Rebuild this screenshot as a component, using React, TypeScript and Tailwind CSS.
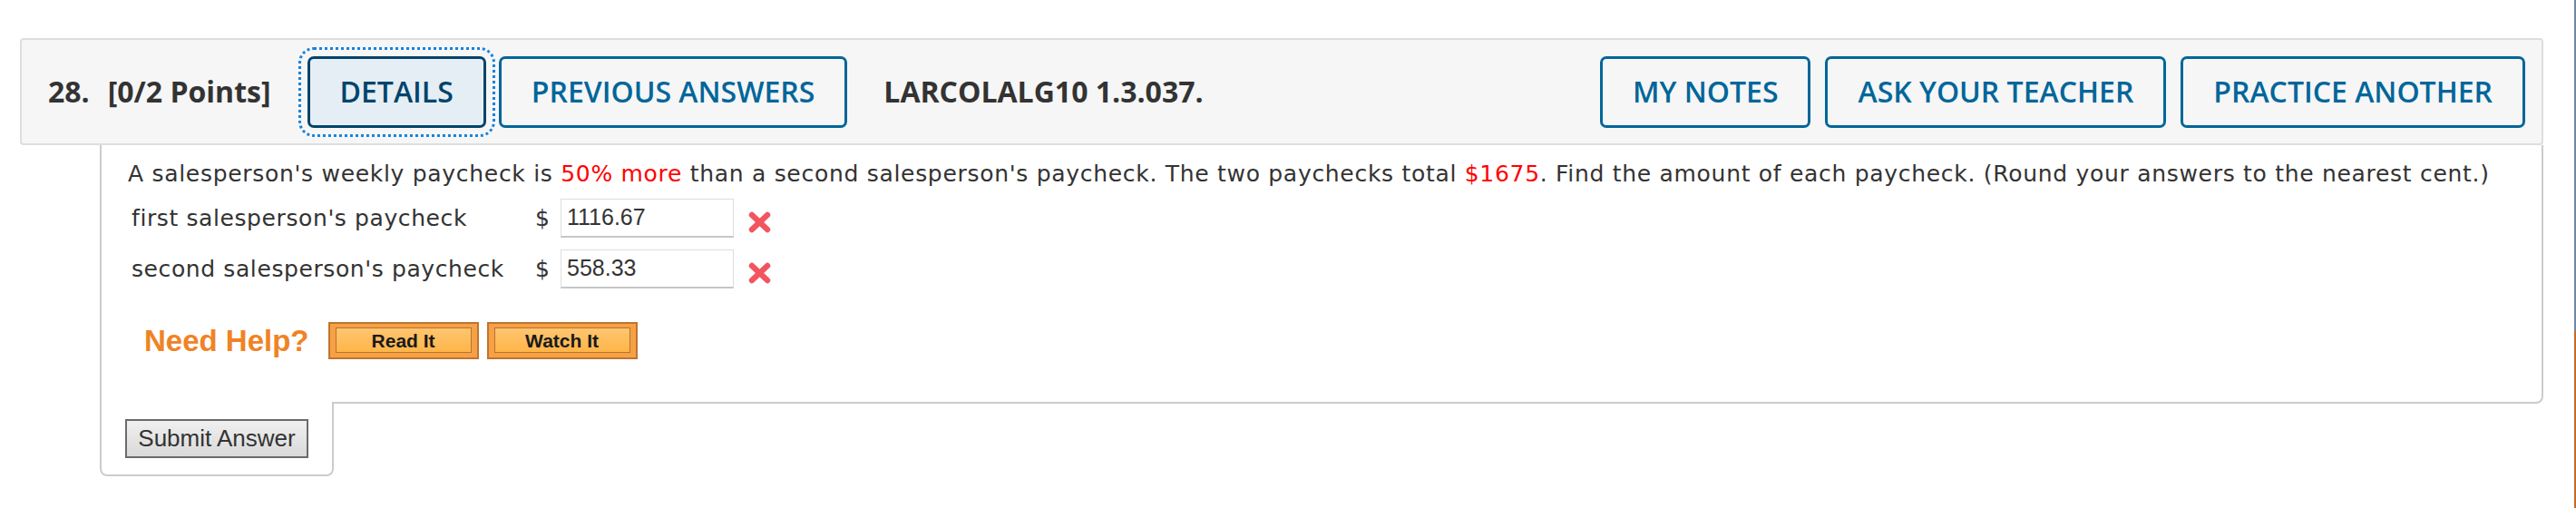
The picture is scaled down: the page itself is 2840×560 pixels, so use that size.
import React from 'react';

const headFont = { fontFamily: '"Open Sans", "Liberation Sans", sans-serif' };
const bodyFont = { fontFamily: '"DejaVu Sans", Verdana, sans-serif' };
const arialFont = { fontFamily: '"Liberation Sans", Arial, sans-serif' };

function OutlineButton({ label, active = false }: { label: string; active?: boolean }) {
  return (
    <div
      className={`h-[79px] px-[33px] flex items-center rounded-[7px] border-[3px] text-[32px] font-semibold whitespace-nowrap ${
        active
          ? 'bg-[#e6eef5] border-[#00446b] text-[#00446b] outline-[3px] outline-dotted outline-[#1583e0] outline-offset-[7px]'
          : 'border-[#00669a] text-[#00669a]'
      }`}
    >
      {label}
    </div>
  );
}

function WrongMark() {
  return (
    <svg width="27" height="24" viewBox="0 0 27 24" className="ml-[15px] mt-[9px]">
      <g stroke="#f2555f" strokeWidth="6.5" strokeLinecap="round">
        <line x1="5" y1="4" x2="22" y2="20" />
        <line x1="22" y1="4" x2="5" y2="20" />
      </g>
    </svg>
  );
}

function AnswerRow({ label, value }: { label: string; value: string }) {
  return (
    <div className="flex items-center h-[43px]">
      <div className="w-[449px] pl-[4px] text-[25px] tracking-[0.6px] text-[#333] whitespace-nowrap" style={bodyFont}>
        {label}
      </div>
      <div className="w-[28px] text-[25px] text-[#333]" style={bodyFont}>
        $
      </div>
      <div
        className="w-[191px] h-[43px] flex items-center pl-[6px] bg-white border border-[#dedede] border-b-2 border-b-[#c6c6c6] text-[25px] text-[#333]"
        style={arialFont}
      >
        {value}
      </div>
      <WrongMark />
    </div>
  );
}

function HelpButton({ label }: { label: string }) {
  return (
    <div className="w-[166px] h-[41px] border-2 border-[#bf7431] bg-[#f6a145] px-[6px] pt-[4px] pb-[5px]">
      <div
        className="h-full flex items-center justify-center border border-[#b8732f] bg-gradient-to-b from-[#ffc56f] to-[#ffb547] text-[21px] font-bold text-[#1a1a1a]"
        style={arialFont}
      >
        {label}
      </div>
    </div>
  );
}

export default function App() {
  return (
    <div className="w-[2840px] h-[560px] bg-white flex">
      <div className="flex-1 pt-[42px] pl-[22px] pr-[34px]">
        {/* question header */}
        <div
          className="h-[118px] flex items-center bg-[#f6f6f6] border-2 border-[#dedede] rounded-[4px] pl-[29px] pr-[18px] text-[#333]"
          style={headFont}
        >
          <span className="text-[32px] font-bold">28.</span>
          <span className="text-[32px] font-bold ml-[20px]">[0/2 Points]</span>
          <div className="ml-[40px] flex items-center gap-[14px]">
            <OutlineButton label="DETAILS" active />
            <OutlineButton label="PREVIOUS ANSWERS" />
          </div>
          <span className="ml-[40px] text-[32px] font-bold">LARCOLALG10 1.3.037.</span>
          <div className="ml-auto flex items-center gap-[16px]">
            <OutlineButton label="MY NOTES" />
            <OutlineButton label="ASK YOUR TEACHER" />
            <OutlineButton label="PRACTICE ANOTHER" />
          </div>
        </div>

        {/* question body */}
        <div className="ml-[88px]">
          <div className="h-[285px] border-2 border-t-0 border-[#cccccc] rounded-br-[8px] pl-[29px] pt-[17px]">
            <p className="text-[25px] tracking-[0.7px] leading-[30px] text-[#333] whitespace-nowrap" style={bodyFont}>
              A salesperson's weekly paycheck is <span className="text-[#ff0000]">50% more</span> than a second
              salesperson's paycheck. The two paychecks total <span className="text-[#ff0000]">$1675</span>. Find the
              amount of each paycheck. (Round your answers to the nearest cent.)
            </p>
            <div className="mt-[12px] flex flex-col gap-[13px]">
              <AnswerRow label="first salesperson's paycheck" value="1116.67" />
              <AnswerRow label="second salesperson's paycheck" value="558.33" />
            </div>
            <div className="mt-[33px] flex items-center">
              <span
                className="ml-[18px] text-[33px] font-bold text-[#f08325]"
                style={arialFont}
              >
                Need Help?
              </span>
              <div className="ml-[21px] flex gap-[9px]">
                <HelpButton label="Read It" />
                <HelpButton label="Watch It" />
              </div>
            </div>
          </div>

          {/* submit tab */}
          <div className="relative -mt-[2px] w-[258px] h-[82px] bg-white border-2 border-t-0 border-[#cccccc] rounded-b-[8px] pl-[26px] pt-[19px]">
            <button
              className="w-[202px] h-[43px] border-2 border-[#6b6b6b] bg-gradient-to-b from-[#f0f0f0] to-[#d9d9d9] text-[26px] text-[#333]"
              style={arialFont}
            >
              Submit Answer
            </button>
          </div>
        </div>
      </div>

      {/* neighbouring panel edge */}
      <div className="w-[2px] flex flex-col">
        <div className="h-[365px] bg-[#7088a6]" />
        <div className="flex-1 bg-[#c46a28]" />
      </div>
    </div>
  );
}
